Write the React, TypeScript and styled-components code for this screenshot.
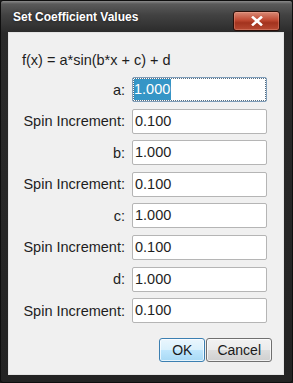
import styled, { createGlobalStyle } from "styled-components";

const GlobalStyle = createGlobalStyle`
  html, body {
    margin: 0;
    padding: 0;
    background: #1c1c1c;
  }
  body {
    font-family: "Liberation Sans", Arial, sans-serif;
  }
`;

type Row = {
  label: string;
  value: string;
  focused?: boolean;
};

const rows: Row[] = [
  { label: "a:", value: "1.000", focused: true },
  { label: "Spin Increment:", value: "0.100" },
  { label: "b:", value: "1.000" },
  { label: "Spin Increment:", value: "0.100" },
  { label: "c:", value: "1.000" },
  { label: "Spin Increment:", value: "0.100" },
  { label: "d:", value: "1.000" },
  { label: "Spin Increment:", value: "0.100" },
];

const App = () => {
  return (
    <>
      <GlobalStyle />
      <Window>
        <TitleBar>
          <Title>Set Coefficient Values</Title>
          <CloseButton aria-label="Close">
            <svg width="12" height="10" viewBox="0 0 12 10">
              <path
                d="M2 1.5 L10 8.5 M10 1.5 L2 8.5"
                stroke="#fff"
                strokeWidth="2.6"
                strokeLinecap="square"
              />
            </svg>
          </CloseButton>
        </TitleBar>
        <Panel>
          <Formula>f(x) = a*sin(b*x + c) + d</Formula>
          <Form>
            {rows.map((row, i) => (
              <FieldRow key={i}>
                <Label>{row.label}</Label>
                <Field $focused={row.focused}>
                  {row.focused ? <Selection>{row.value}</Selection> : row.value}
                </Field>
              </FieldRow>
            ))}
          </Form>
          <ButtonRow>
            <Button $primary>OK</Button>
            <Button>Cancel</Button>
          </ButtonRow>
        </Panel>
      </Window>
    </>
  );
};

const Window = styled.div`
  width: 293px;
  height: 383px;
  box-sizing: border-box;
  display: flex;
  flex-direction: column;
  border: 1px solid #0e0e0e;
  border-radius: 3px;
  background: linear-gradient(
    180deg,
    #8a8a8a 0px,
    #5a5a5a 3px,
    #424242 14px,
    #2a2a2a 32px,
    #232323 100%
  );
  overflow: hidden;
`;

const TitleBar = styled.div`
  height: 31px;
  flex: none;
  display: flex;
  align-items: center;
  justify-content: space-between;
  padding: 0 12px 0 12px;
`;

const Title = styled.span`
  color: #ffffff;
  font-size: 12px;
  font-weight: 700;
  margin-top: 1px;
  text-shadow: 0 0 3px rgba(0, 0, 0, 0.6);
`;

const CloseButton = styled.div`
  width: 47px;
  height: 20px;
  box-sizing: border-box;
  margin-top: 8px;
  display: flex;
  align-items: center;
  justify-content: center;
  border: 1px solid #2a0e08;
  border-radius: 3px;
  background: linear-gradient(
    180deg,
    #d98a76 0%,
    #c04a33 45%,
    #a3331e 60%,
    #b84a33 100%
  );
  box-shadow: inset 0 0 0 1px rgba(255, 190, 170, 0.3);
`;

const Panel = styled.div`
  flex: 1;
  margin: 0 8px 7px 7px;
  background: #f0f0f0;
  border: 1px solid #e4e4e4;
  display: flex;
  flex-direction: column;
  padding: 19px 16px 0 13px;
  color: #1e1e1e;
  font-size: 14px;
`;

const Formula = styled.div`
  line-height: 17px;
  font-size: 14.5px;
`;

const Form = styled.div`
  display: flex;
  flex-direction: column;
  gap: 6.6px;
  margin-top: 8px;
`;

const FieldRow = styled.div`
  display: grid;
  grid-template-columns: 1fr 135px;
  column-gap: 7px;
  align-items: center;
`;

const Label = styled.span`
  text-align: right;
  font-size: 14.5px;
  white-space: nowrap;
`;

const Field = styled.div<{ $focused?: boolean }>`
  height: 25px;
  box-sizing: border-box;
  display: flex;
  align-items: stretch;
  padding: 1px;
  background: #ffffff;
  border: 1px solid ${({ $focused }) => ($focused ? "#7f9db9" : "#b5b5b5")};
  border-radius: 2px;
  font-size: 14.5px;
  line-height: 21px;
  padding-left: ${({ $focused }) => ($focused ? "1px" : "2px")};
  outline: ${({ $focused }) => ($focused ? "1px dotted #5a6f80" : "none")};
  outline-offset: -2px;
`;

const Selection = styled.span`
  background: #3595c6;
  color: #ffffff;
  padding-right: 1px;
`;

const ButtonRow = styled.div`
  display: flex;
  justify-content: flex-end;
  gap: 1px;
  margin-top: 15px;
  margin-right: -5px;
`;

const Button = styled.div<{ $primary?: boolean }>`
  height: 24px;
  box-sizing: border-box;
  padding: 0 ${({ $primary }) => ($primary ? "12px" : "10px")};
  min-width: 45px;
  display: flex;
  align-items: center;
  justify-content: center;
  font-size: 14px;
  color: #1a1a1a;
  border-radius: 3px;
  border: 1px solid ${({ $primary }) => ($primary ? "#3c7fb1" : "#707070")};
  background: ${({ $primary }) =>
    $primary
      ? "linear-gradient(180deg, #eaf6fd 0%, #d9f0fc 48%, #bee6fd 52%, #a7d9f5 100%)"
      : "linear-gradient(180deg, #f2f2f2 0%, #ebebeb 48%, #dddddd 52%, #cfcfcf 100%)"};
  box-shadow: inset 0 0 0 1px rgba(255, 255, 255, 0.7);
`;

export default App;
